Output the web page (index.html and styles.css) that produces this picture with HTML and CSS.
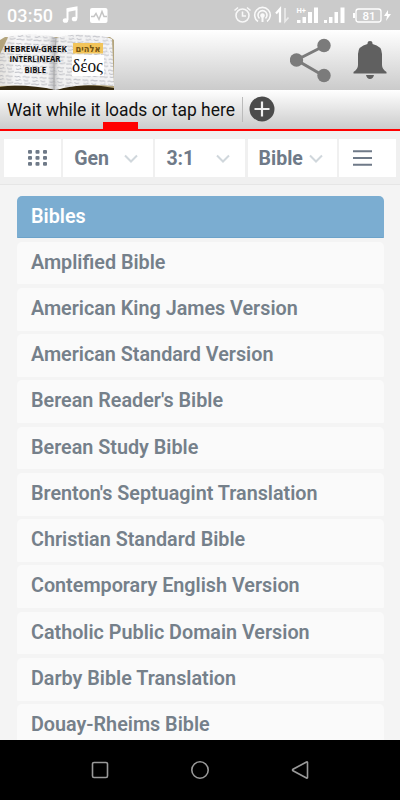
FILE: index.html
```html
<!DOCTYPE html>
<html lang="en">
<head>
<meta charset="utf-8">
<title>Hebrew-Greek Interlinear Bible</title>
<link rel="stylesheet" href="styles.css">
</head>
<body>
<div class="status">
  <span class="clock">03:50</span>
  <svg class="status-left" width="48" height="20" viewBox="62 6 48 20" fill="none" stroke="#fff">
    <path d="M67.500 20V9l9-1.500V18.500" stroke-width="2"/><path d="M67 10.500l10-2" stroke-width="3"/>
    <ellipse cx="65.500" cy="20.500" rx="2.700" ry="2.300" fill="#fff" stroke="none"/><ellipse cx="74.500" cy="19" rx="2.700" ry="2.300" fill="#fff" stroke="none"/>
    <rect x="90" y="8" width="17.500" height="15" rx="2" fill="#fff" stroke="none"/>
    <path d="M91 16.500h3l2-3 3 6 3-8 2 5h3" stroke="#c5c5c5" stroke-width="1.500"/>
  </svg>
  <svg class="status-right" width="167" height="22" viewBox="233 4 167 22" fill="none" stroke="#fff">
    <g stroke-width="1.600" opacity=".85"><circle cx="242.500" cy="15.500" r="6.500"/><path d="M242.500 11.500v4.500h3.500M234.500 10.500l3.500-3M250.500 10.500l-3.500-3"/></g>
    <g stroke-width="1.600" opacity=".9"><path d="M258 21.500a7.800 7.800 0 1 1 9 0M259.500 18.500a4.500 4.500 0 1 1 6 0"/><circle cx="262.500" cy="15.500" r="1.500" fill="#fff"/><path d="M262.500 16v6" stroke-width="2"/></g>
    <path d="M280 22.500V9l-4 4.500" stroke-width="2.200"/><path d="M285 8v13.500l3.500-4" stroke-width="1.700" opacity=".6"/>
    <g fill="#fff" stroke="none">
      <rect x="297" y="20" width="3.500" height="3"/><rect x="302.500" y="17" width="3.500" height="6"/><rect x="308" y="12" width="4" height="11"/><rect x="314" y="7.500" width="4" height="15.500"/>
      <rect x="324" y="20" width="3" height="3"/><rect x="329" y="17" width="3.500" height="6"/><rect x="334.500" y="12" width="3.500" height="11"/><rect x="340.500" y="7.500" width="4" height="15.500"/>
      <rect x="353" y="13" width="2" height="5"/><path d="M388 10l-4 6h3l-1 5 5-7h-3z"/>
      <text class="tiny" x="296.500" y="13">H+</text><text class="battery" x="362.500" y="19.500">81</text>
    </g>
    <rect x="356" y="9" width="25" height="13" rx="2.500" stroke-width="1.300"/>
  </svg>
</div>
<header class="brand">
  <svg class="logo" width="114" height="60" viewBox="0 0 114 60">
    <defs>
      <pattern id="script" width="17" height="11" patternUnits="userSpaceOnUse" patternTransform="rotate(3)">
        <path d="M0 1.500l3 .5 1-1 2 1.500M8 2l2-1 2 1 3-.5M1 5l2 .5 3-1 1 1M9 4.500l2 1 3-.5M0 8.500l4-.5 2 1 2-1M10 8l2 .5 4-1" fill="none" stroke="#9495a0" stroke-width=".6"/>
      </pattern>
      <linearGradient id="pages"><stop offset="0" stop-color="#e4e2de"/><stop offset=".15" stop-color="#f7f7f8"/><stop offset=".42" stop-color="#f2f2f2"/><stop offset=".475" stop-color="#c4c4c6"/><stop offset=".52" stop-color="#f1f1f1"/><stop offset="1" stop-color="#f4f4f6"/></linearGradient>
    </defs>
    <path d="M0 10l5-3h105l4 3v50H0z" fill="#b3a47c"/>
    <path d="M0 57q27-5 52 2h6q28-7 56-1v2H0z" fill="#352910"/>
    <path d="M0 24Q6 12 8 7q15-4 30-2 13 0 18 3 15-5 34-3 12 0 22 4l2 47q-34-3-58 4-26-6-56-4z" fill="url(#pages)"/>
    <path d="M0 24Q6 12 8 7q15-4 30-2 13 0 18 3 15-5 34-3 12 0 22 4l2 47q-34-3-58 4-26-6-56-4z" fill="url(#script)"/>
    <path d="M56 8q-3 25-2 52" fill="none" stroke="#aaa" stroke-width="1"/>
    <rect x="73" y="13" width="30" height="10.500" fill="#f2c45a"/><rect x="72" y="25" width="32" height="21" fill="#fff"/>
    <g class="logo-title"><text x="4" y="21.500" textLength="63" lengthAdjust="spacingAndGlyphs">HEBREW-GREEK</text><text x="9.500" y="32" textLength="51" lengthAdjust="spacingAndGlyphs">INTERLINEAR</text><text x="24.500" y="42.500" textLength="21.500" lengthAdjust="spacingAndGlyphs">BIBLE</text></g>
    <text class="hebrew" x="88" y="21.500" text-anchor="middle" textLength="25" lengthAdjust="spacingAndGlyphs">אלהים</text>
    <text class="greek" x="72" y="42" textLength="31" lengthAdjust="spacingAndGlyphs">δέος</text>
  </svg>
  <svg class="actions" width="110" height="60" viewBox="290 30 110 60">
    <g fill="#7b7b7b"><path d="M324 46L296.500 60 324 76" fill="none" stroke="#7b7b7b" stroke-width="3"/><circle cx="296.500" cy="60" r="6.700"/><circle cx="324" cy="45.500" r="6.700"/><circle cx="324" cy="75.500" r="6.700"/></g>
    <path d="M353.500 73.500v-1.500q4.500-3 4.500-7V54q0-8 9.500-10v-1q0-2 2.500-2t2.500 2v1q9.500 2 9.500 10v11q0 4 4.500 7v1.500zM366 75h8q-1 4-4 4t-4-4z" fill="#606060"/>
  </svg>
</header>
<div class="notice">
  <span class="notice-text">Wait while it loads or tap here</span><i class="divider"></i>
  <svg width="26" height="26" viewBox="0 0 26 26"><circle cx="13" cy="13" r="12.500" fill="#4b4b4b"/><path d="M13 5.500v15M5.500 13h15" stroke="#eee" stroke-width="2.200"/></svg>
  <i class="progress"></i>
</div>
<nav class="toolbar">
  <div class="cell apps"><svg width="20" height="16" viewBox="0 0 20 16" fill="#6f7a88"><rect width="4" height="3.800" rx="1"/><rect x="7.500" width="4" height="3.800" rx="1"/><rect x="15" width="4" height="3.800" rx="1"/><rect y="6" width="4" height="3.800" rx="1"/><rect x="7.500" y="6" width="4" height="3.800" rx="1"/><rect x="15" y="6" width="4" height="3.800" rx="1"/><rect y="12" width="4" height="3.800" rx="1"/><rect x="7.500" y="12" width="4" height="3.800" rx="1"/><rect x="15" y="12" width="4" height="3.800" rx="1"/></svg></div>
  <div class="cell"><span>Gen</span><svg class="chevron" viewBox="0 0 14 9"><path d="M1 1.500l6 6 6-6"/></svg></div>
  <div class="cell"><span>3:1</span><svg class="chevron" viewBox="0 0 14 9"><path d="M1 1.500l6 6 6-6"/></svg></div>
  <div class="cell bible"><span>Bible</span><svg class="chevron" viewBox="0 0 14 9"><path d="M1 1.500l6 6 6-6"/></svg></div>
  <div class="cell menu"><svg width="19" height="16" viewBox="0 0 19 16"><path d="M0 1.200h19M0 8h19M0 14.800h19" stroke="#6f7a88" stroke-width="2"/></svg></div>
</nav>
<main class="list">
  <h1>Bibles</h1>
  <div class="item">Amplified Bible</div>
  <div class="item">American King James Version</div>
  <div class="item">American Standard Version</div>
  <div class="item">Berean Reader's Bible</div>
  <div class="item">Berean Study Bible</div>
  <div class="item">Brenton's Septuagint Translation</div>
  <div class="item">Christian Standard Bible</div>
  <div class="item">Contemporary English Version</div>
  <div class="item">Catholic Public Domain Version</div>
  <div class="item">Darby Bible Translation</div>
  <div class="item">Douay-Rheims Bible</div>
</main>
<footer class="navbar">
  <svg width="20" height="20" viewBox="0 0 20 20"><rect x="2.500" y="2.500" width="15" height="15" rx="1.500"/></svg>
  <svg width="20" height="20" viewBox="0 0 20 20"><circle cx="10" cy="10" r="8.200"/></svg>
  <svg width="20" height="20" viewBox="0 0 20 20"><path d="M17.500 2.500v15q0 1-1 .5L3 10.800q-1-.8 0-1.600L16.500 2q1-.5 1 .5z"/></svg>
</footer>
</body>
</html>
```

FILE: styles.css
```css
* { box-sizing: border-box; }
body { margin: 0; width: 400px; height: 800px; overflow: hidden; display: flex; flex-direction: column; background: #f4f4f4; font-family: Roboto, sans-serif; }
svg { display: block; flex: none; }
.status { height: 30px; flex: none; display: flex; align-items: center; padding-left: 7px; background: #cbcbcb; color: #fff; }
.clock { width: 55px; font-size: 18px; font-weight: 500; line-height: 30px; padding-top: 1px; letter-spacing: .1px; }
.status-left { margin-top: 2px; }
.status-right { margin-left: auto; }
.tiny { font-size: 7.5px; font-weight: 700; }
.battery { font-size: 11.5px; font-weight: 500; }
.brand { height: 60px; flex: none; display: flex; justify-content: space-between; background: linear-gradient(#fff, #cbcbcb); }
.logo-title { font: 700 8px "Open Sans", sans-serif; fill: #111; }
.hebrew { font: 700 10px "DejaVu Sans", sans-serif; fill: #765411; }
.greek { font: 19px "Liberation Serif", serif; fill: #111; }
.notice { position: relative; height: 41px; flex: none; display: flex; align-items: center; padding: 0 7px 1px; background: linear-gradient(#fff, #cbcbcb); border-bottom: 2px solid #f00; }
.notice-text { width: 235px; padding-top: 1px; font-size: 17.43px; line-height: 24px; color: #111; white-space: nowrap; }
.divider { width: 1px; height: 25px; margin-right: 6px; background: #bbb; }
.progress { position: absolute; left: 103px; bottom: 0; width: 35px; height: 7px; background: #f00; }
.toolbar { height: 54px; flex: none; padding: 8px 4px 7px; display: grid; grid-template-columns: 57px 90px 90px 89.3px 57px; column-gap: 2.2px; background: #f0f0f0; border-bottom: 1px solid #e6e6e6; }
.cell { display: flex; align-items: center; justify-content: space-between; padding: 0 15px 0 11px; background: #fff; color: #6f7a88; font-size: 19.5px; font-weight: 700; }
.apps { padding: 0 0 0 24px; }
.bible { padding-left: 11px; padding-right: 14px; }
.menu { padding: 0 0 0 14px; }
.chevron { width: 14px; height: 9px; fill: none; stroke: #d0d7dc; stroke-width: 2; }
.list { flex: 1; min-height: 0; overflow: hidden; padding: 11px 16px 0 17px; display: flex; flex-direction: column; gap: 3.65px; }
h1, .item { flex: none; height: 42.62px; margin: 0; padding-left: 14px; font-size: 19.75px; line-height: 41px; font-weight: 600; border-radius: 5px 5px 1px 1px; white-space: nowrap; }
h1 { height: 42px; line-height: 41px; background: #7badd1; color: #fff; border-bottom: 1px solid #6ca3ca; }
.item { background: #fafafa; color: #75808a; }
.navbar { height: 60px; flex: none; display: flex; justify-content: center; gap: 80px; align-items: center; background: #000; }
.navbar svg { fill: none; stroke: #999; stroke-width: 1.6; }
```
